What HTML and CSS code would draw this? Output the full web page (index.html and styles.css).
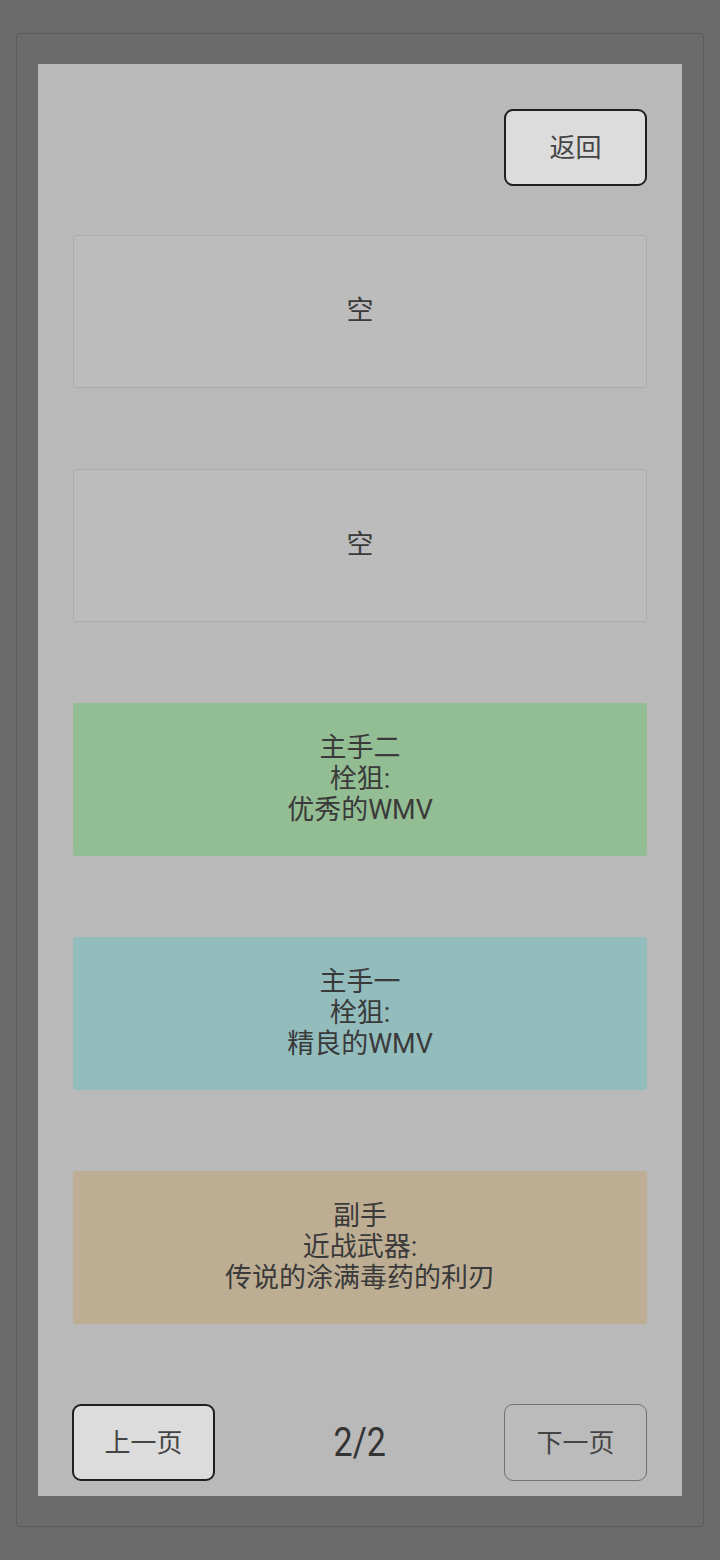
FILE: index.html
```html
<!DOCTYPE html>
<html>
<head>
  <title>装备</title>
  <link rel="stylesheet" href="styles.css">
</head>
<body>

<div class="frame">
  <div class="panel">
    <div class="top-bar">
      <button class="btn btn-active">返回</button>
    </div>

    <div class="slots">
      <div class="slot slot-empty">空</div>
      <div class="slot slot-empty">空</div>
      <div class="slot slot-green">主手二<br>栓狙:<br>优秀的WMV</div>
      <div class="slot slot-teal">主手一<br>栓狙:<br>精良的WMV</div>
      <div class="slot slot-tan">副手<br>近战武器:<br>传说的涂满毒药的利刃</div>
    </div>

    <div class="pager">
      <button class="btn btn-active">上一页</button>
      <span class="page-num">2/2</span>
      <button class="btn btn-disabled">下一页</button>
    </div>
  </div>
</div>

</body>
</html>
```

FILE: styles.css
```css
html, body { margin: 0; padding: 0; }
body {
  background: #6b6b6b;
  font-family: Roboto, "Noto Sans CJK SC", sans-serif;
  color: #3a3a3a;
  width: 720px;
  height: 1560px;
  padding-top: 33px;
  box-sizing: border-box;
}
.frame {
  margin: 0 16px;
  height: 1494px;
  border: 1px solid #5c5c5c;
  border-radius: 4px;
  box-sizing: border-box;
  padding: 30px 21px;
}
.panel {
  background: #b9b9b9;
  height: 1432px;
  box-sizing: border-box;
  padding: 45px 35px 0;
}
.top-bar { display: flex; justify-content: flex-end; }
.btn {
  width: 143px;
  height: 77px;
  border-radius: 9px;
  font-family: "Noto Sans CJK SC", sans-serif;
  font-size: 26px;
  color: #444;
  padding: 0 0 4px;
  cursor: pointer;
}
.btn-active { background: #dcdcdc; border: 2px solid #1f1f1f; }
.btn-disabled { background: #bbbbbb; border: 1.5px solid #727272; }

.slots {
  display: flex;
  flex-direction: column;
  gap: 81px;
  margin-top: 49px;
}
.slot {
  height: 153px;
  box-sizing: border-box;
  border-radius: 3px;
  display: flex;
  align-items: center;
  justify-content: center;
  text-align: center;
  font-size: 27px;
  line-height: 31px;
  color: #3a3a3a;
}
.slot-empty { background: #bcbcbc; border: 1px solid #acacac; }
.slot-green { background: #93bd93; }
.slot-teal { background: #93bdbd; }
.slot-tan { background: #bdae93; }

.pager {
  display: flex;
  justify-content: space-between;
  align-items: center;
  margin-top: 80px;
  margin-left: -1px;
}
.page-num {
  font-family: Roboto, sans-serif;
  font-size: 40px;
  color: #333;
  display: inline-block;
  transform: scaleX(0.85);
}
```
